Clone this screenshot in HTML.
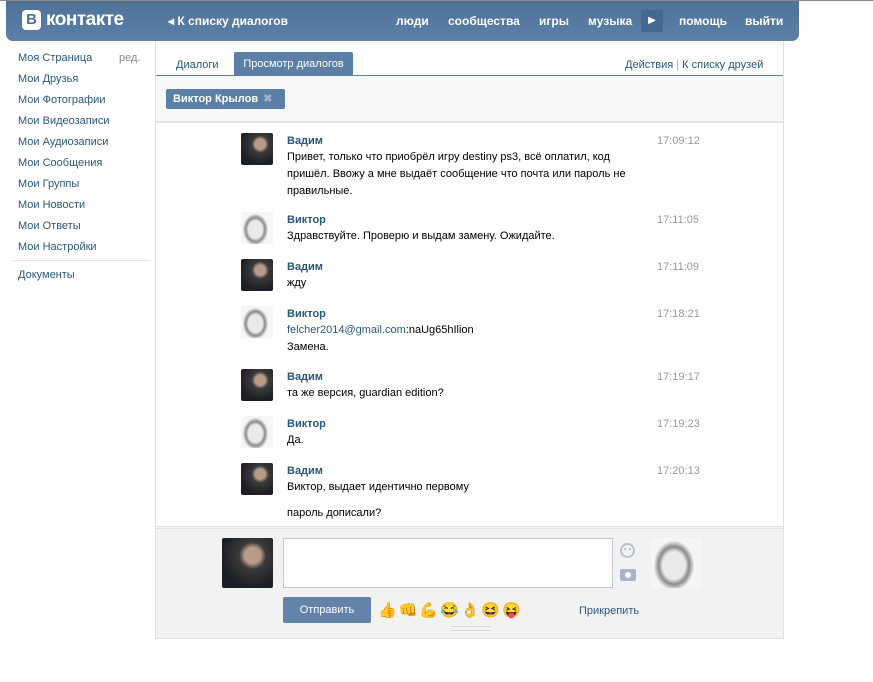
<!DOCTYPE html>
<html><head><meta charset="utf-8">
<style>
*{margin:0;padding:0;box-sizing:border-box}
body{width:873px;height:682px;background:#fff;font-family:"Liberation Sans",Tahoma,sans-serif;font-size:11px;color:#000;position:relative;overflow:hidden}
a{color:#2b587a;text-decoration:none}
.abs{position:absolute}
#top{position:absolute;left:0;top:0;width:873px;height:1px;background:#8a8a8a}
#hdr{position:absolute;left:6px;top:1px;width:793px;height:40px;background:linear-gradient(#4e7198,#5b80a7);border-radius:0 0 7px 7px}
#hdr .n{position:absolute;top:13px;color:#fff;font-size:12px;font-weight:bold}
.logo{position:absolute;left:16px;top:9px;width:19px;height:20px;background:#fff;border-radius:4px;color:#4e7198;font-weight:bold;font-size:15px;text-align:center;line-height:20px}
.side a{position:absolute;left:18px;font-size:11px}
.av1{position:absolute;width:32px;height:32px;background:radial-gradient(circle at 60% 35%,#b89a88 0 18%,#3a3a3a 30%,#1c1f26 70%),#222;border-radius:2px}
.av2{position:absolute;width:32px;height:32px;background:radial-gradient(ellipse 40% 50% at 45% 55%,#eaeaea 0 55%,#8a8a8a 75%,#f6f6f6 100%);border-radius:2px}
.nm{position:absolute;left:287px;color:#2b587a;font-weight:bold}
.tm{position:absolute;left:657px;color:#999}
.tx{position:absolute;left:287px;line-height:17px;width:360px}
</style></head><body>
<div id="top"></div>
<div id="hdr">
 <div class="logo">B</div>
 <div class="n" style="left:40px;top:8px;font-size:19px;letter-spacing:-0.5px">контакте</div>
 <div class="n" style="left:162px;font-size:12px">◂ К списку диалогов</div>
 <div class="n" style="left:390px">люди</div>
 <div class="n" style="left:442px">сообщества</div>
 <div class="n" style="left:533px">игры</div>
 <div class="n" style="left:582px">музыка</div>
 <div style="position:absolute;left:635px;top:9px;width:22px;height:22px;background:#44678f;border-radius:2px;color:#fff;text-align:center;line-height:22px;font-size:10px">▶</div>
 <div class="n" style="left:673px">помощь</div>
 <div class="n" style="left:739px">выйти</div>
</div>
<div class="side">
<a style="top:52px">Моя Страница</a><span class="abs" style="left:119px;top:52px;color:#888">ред.</span>
<a style="top:73px">Мои Друзья</a>
<a style="top:94px">Мои Фотографии</a>
<a style="top:115px">Мои Видеозаписи</a>
<a style="top:136px">Мои Аудиозаписи</a>
<a style="top:157px">Мои Сообщения</a>
<a style="top:178px">Мои Группы</a>
<a style="top:199px">Мои Новости</a>
<a style="top:220px">Мои Ответы</a>
<a style="top:241px">Мои Настройки</a>
<div class="abs" style="left:13px;top:260px;width:136px;height:1px;background:#e4e8ec"></div>
<a style="top:269px">Документы</a>
</div>
<div class="abs" style="left:155px;top:41px;width:629px;height:598px;border-left:1px solid #dae1e8;border-right:1px solid #dae1e8;border-bottom:1px solid #dae1e8"></div>
<a class="abs" style="left:176px;top:59px">Диалоги</a>
<div class="abs" style="left:234px;top:52px;width:119px;height:23px;background:#5b7fa6;border-radius:2px 2px 0 0;color:#fff;text-align:center;line-height:25px">Просмотр диалогов</div>
<div class="abs" style="left:625px;top:59px;color:#2b587a">Действия <span style="color:#aaa">|</span> К списку друзей</div>
<div class="abs" style="left:156px;top:75px;width:627px;height:1px;background:#5b7fa6"></div>
<div class="abs" style="left:156px;top:76px;width:627px;height:47px;background:#f7f7f7;border-bottom:2px solid #e4e4e4"></div>
<div class="abs" style="left:166px;top:89px;width:119px;height:20px;background:#5b7fa6;border-radius:2px;color:#fff;font-weight:bold;line-height:21px;padding-left:7px">Виктор Крылов <span style="color:#9db3cc;margin-left:2px">✖</span></div>

<div class="av1" style="left:241px;top:133px"></div>
<div class="nm" style="top:135px">Вадим</div><div class="tm" style="top:135px">17:09:12</div>
<div class="tx" style="top:149px">Привет, только что приобрёл игру destiny ps3, всё оплатил, код пришёл. Ввожу а мне выдаёт сообщение что почта или пароль не правильные.</div>

<div class="av2" style="left:241px;top:212px"></div>
<div class="nm" style="top:214px">Виктор</div><div class="tm" style="top:214px">17:11:05</div>
<div class="tx" style="top:228px">Здравствуйте. Проверю и выдам замену. Ожидайте.</div>

<div class="av1" style="left:241px;top:259px"></div>
<div class="nm" style="top:261px">Вадим</div><div class="tm" style="top:261px">17:11:09</div>
<div class="tx" style="top:275px">жду</div>

<div class="av2" style="left:241px;top:306px"></div>
<div class="nm" style="top:308px">Виктор</div><div class="tm" style="top:308px">17:18:21</div>
<div class="tx" style="top:322px"><a>felcher2014@gmail.com</a>:naUg65hIlion<br>Замена.</div>

<div class="av1" style="left:241px;top:369px"></div>
<div class="nm" style="top:371px">Вадим</div><div class="tm" style="top:371px">17:19:17</div>
<div class="tx" style="top:385px">та же версия, guardian edition?</div>

<div class="av2" style="left:241px;top:416px"></div>
<div class="nm" style="top:418px">Виктор</div><div class="tm" style="top:418px">17:19:23</div>
<div class="tx" style="top:432px">Да.</div>

<div class="av1" style="left:241px;top:463px"></div>
<div class="nm" style="top:465px">Вадим</div><div class="tm" style="top:465px">17:20:13</div>
<div class="tx" style="top:479px">Виктор, выдает идентично первому<br><span style="display:block;margin-top:9px">пароль дописали?</span></div>

<div class="abs" style="left:156px;top:526px;width:627px;height:112px;background:#f2f2f2;border-top:3px double #dfe3e8"></div>
<div class="av1" style="left:222px;top:538px;width:51px;height:50px"></div>
<div class="abs" style="left:283px;top:538px;width:330px;height:50px;background:#fff;border:1px solid #c0cad5"></div>
<div class="abs" style="left:620px;top:543px;width:15px;height:15px;border:2px solid #b7c3d0;border-radius:50%"></div>
<div class="abs" style="left:624px;top:548px;width:2px;height:2px;background:#b7c3d0"></div>
<div class="abs" style="left:629px;top:548px;width:2px;height:2px;background:#b7c3d0"></div>
<div class="abs" style="left:620px;top:569px;width:16px;height:12px;background:#a6b5c7;border-radius:2px"></div>
<div class="abs" style="left:625px;top:572px;width:6px;height:6px;background:#fff;border-radius:50%"></div>
<div class="av2" style="left:651px;top:538px;width:51px;height:50px"></div>
<div class="abs" style="left:283px;top:597px;width:88px;height:26px;background:#6383a8;border-radius:2px;color:#fff;text-align:center;line-height:27px">Отправить</div>
<div class="abs" style="left:378px;top:601px;font-size:15px;letter-spacing:2px;font-family:'Noto Color Emoji','DejaVu Sans',sans-serif">👍👊💪😂👌😆😝</div>
<a class="abs" style="left:579px;top:605px">Прикрепить</a>
<div class="abs" style="left:451px;top:626px;width:40px;height:5px;border-top:1px solid #d4d8dd;border-bottom:1px solid #d4d8dd"></div>
</body></html>
